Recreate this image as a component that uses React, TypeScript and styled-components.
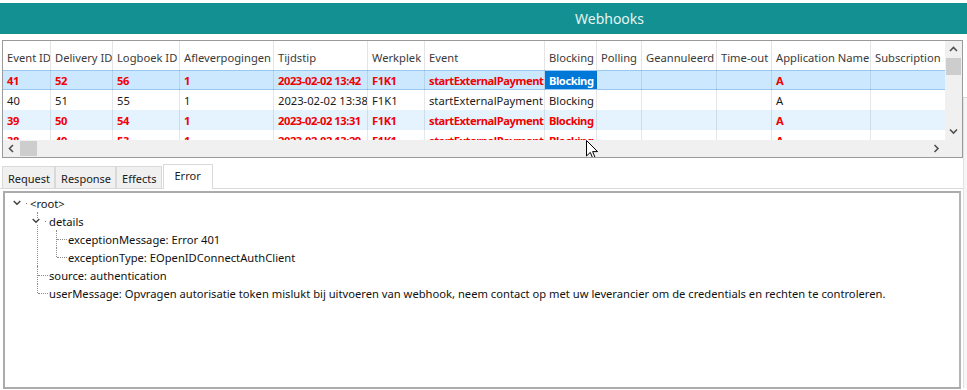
import styled, { createGlobalStyle } from "styled-components";

const GlobalStyle = createGlobalStyle`
  html, body {
    margin: 0;
    padding: 0;
    background: #fff;
    overflow: hidden;
  }
  body {
    font-family: "Noto Sans", "Segoe UI", Arial, sans-serif;
    font-size: 11.2px;
    color: #1a1a1a;
  }
`;

const Page = styled.div`
  width: 967px;
  height: 390px;
  padding-top: 3px;
  box-sizing: border-box;
`;

const TitleBar = styled.div`
  height: 31px;
  background: #139091;
  display: flex;
  align-items: center;
  padding-left: 575px;
  color: #e6f3f3;
  font-size: 14px;
`;

const Body = styled.div`
  display: flex;
`;

const Main = styled.div`
  width: 963px;
  padding-top: 6px;
`;

const Rail = styled.div`
  flex: 1;
  margin-top: 63px;
  height: 290px;
  border-top: 1px solid #d4d4d4;
  border-left: 1px solid #e2e2e2;
  background: #f6f6f6;
`;

const GridFrame = styled.div`
  position: relative;
  margin-left: 2px;
  width: 961px;
  height: 118px;
  box-sizing: border-box;
  border: 1px solid #9a9a9a;
  background: #fff;
  overflow: hidden;
`;

const GridTop = styled.div`
  display: flex;
  height: 99px;
`;

const TableArea = styled.div`
  width: 942px;
  overflow: hidden;
`;

const HeaderRow = styled.div`
  display: flex;
  height: 29px;
  color: #3a3a3a;
`;

const HeadCell = styled.div<{ $w: number }>`
  flex: none;
  width: ${(p) => p.$w}px;
  box-sizing: border-box;
  padding: 3px 0 0 4px;
  display: flex;
  align-items: center;
  border-right: 1px solid #e4e4e4;
  white-space: nowrap;
  overflow: hidden;
`;

type RowKind = "selected" | "plain" | "alt";

const DataRow = styled.div<{ $kind: RowKind; $red: boolean }>`
  display: flex;
  height: 20px;
  box-sizing: border-box;
  background: ${(p) => (p.$kind === "selected" ? "#cce8ff" : p.$kind === "alt" ? "#e5f3ff" : "#fff")};
  box-shadow: ${(p) => (p.$kind === "selected" ? "inset 0 1px #99c9f0, inset 0 -1px #99c9f0" : "none")};
  color: ${(p) => (p.$red ? "#f00000" : "#1a1a1a")};
  font-weight: ${(p) => (p.$red ? 700 : 400)};
  letter-spacing: ${(p) => (p.$red ? "-0.45px" : "0")};
`;

const Cell = styled.div<{ $w: number; $focus?: boolean }>`
  flex: none;
  width: ${(p) => p.$w}px;
  box-sizing: border-box;
  padding-left: 4px;
  display: flex;
  align-items: center;
  white-space: nowrap;
  overflow: hidden;
  border-right: 1px solid rgba(0, 20, 60, 0.1);
  ${(p) =>
    p.$focus &&
    `
    background: #0078d7;
    color: #fff;
    margin: 1px 0;
  `}
`;

const VScroll = styled.div`
  width: 17px;
  background: #f0f0f0;
  display: flex;
  flex-direction: column;
`;

const ArrowBox = styled.div`
  width: 17px;
  height: 17px;
  flex: none;
  display: flex;
  align-items: center;
  justify-content: center;
`;

const VTrack = styled.div`
  flex: 1;
  display: flex;
  flex-direction: column;
  align-items: center;
`;

const VThumb = styled.div`
  width: 15px;
  height: 17px;
  background: #cdcdcd;
`;

const GridBottom = styled.div`
  display: flex;
  height: 17px;
  background: #f0f0f0;
`;

const HScroll = styled.div`
  width: 942px;
  display: flex;
  align-items: center;
`;

const HTrack = styled.div`
  flex: 1;
  height: 100%;
  display: flex;
  align-items: center;
`;

const HThumb = styled.div`
  width: 17px;
  height: 15px;
  background: #cdcdcd;
`;

const Corner = styled.div`
  width: 17px;
`;

const Cursor = styled.svg`
  position: absolute;
  left: 583px;
  top: 99px;
`;

const TabStrip = styled.div`
  display: flex;
  align-items: flex-end;
  height: 30px;
  padding-left: 2px;
  border-bottom: 1px solid #dadada;
`;

const Tab = styled.div<{ $active?: boolean }>`
  height: ${(p) => (p.$active ? 25 : 22)}px;
  padding: ${(p) => (p.$active ? "0 11px 3px 11px" : "1px 4px 0 5px")};
  box-sizing: border-box;
  display: flex;
  align-items: center;
  background: ${(p) => (p.$active ? "#fff" : "#f0f0f0")};
  border: 1px solid #d9d9d9;
  border-bottom: none;
  margin-left: ${(p) => (p.$active ? 1 : 0)}px;
  margin-bottom: ${(p) => (p.$active ? -1 : 0)}px;
  color: #1a1a1a;
  font-size: 11px;
  & + & {
    border-left: ${(p) => (p.$active ? "1px solid #d9d9d9" : "none")};
  }
`;

const Panel = styled.div`
  margin: 2px 0 0 3px;
  width: 958px;
  height: 198px;
  box-sizing: border-box;
  border: 2px solid #ababab;
  border-right-color: #b4b4b4;
  padding-top: 1px;
  background: #fff;
`;

const ChildItem = styled.div<{ $depth: number; $last: boolean }>`
  position: relative;
  &::before {
    content: "";
    position: absolute;
    left: ${(p) => 6 + p.$depth * 19 + 7}px;
    top: 0;
    height: ${(p) => (p.$last ? "9px" : "100%")};
    border-left: 1px dotted #8c8c8c;
  }
`;

const TreeRow = styled.div<{ $depth: number }>`
  display: flex;
  align-items: center;
  height: 18px;
  padding-left: ${(p) => 6 + p.$depth * 19}px;
  white-space: nowrap;
  color: #111;
`;

const Slot = styled.div<{ $leaf: boolean }>`
  position: relative;
  flex: none;
  width: 19px;
  height: 18px;
  display: flex;
  align-items: center;
  ${(p) =>
    p.$leaf &&
    `
    &::after {
      content: "";
      position: absolute;
      left: 8px;
      top: 9px;
      width: 10px;
      border-top: 1px dotted #8c8c8c;
    }
  `}
`;

const Chevron = styled.svg`
  position: relative;
  z-index: 1;
  margin-left: 2px;
  background: #fff;
`;

const Dot = styled.span`
  width: 1px;
  height: 1px;
  margin-left: 5px;
  background: #8c8c8c;
`;

const columns = [
  { key: "eventId", title: "Event ID", w: 48 },
  { key: "deliveryId", title: "Delivery ID", w: 62 },
  { key: "logId", title: "Logboek ID", w: 67 },
  { key: "attempts", title: "Afleverpogingen", w: 94 },
  { key: "time", title: "Tijdstip", w: 94 },
  { key: "place", title: "Werkplek", w: 57 },
  { key: "event", title: "Event", w: 120 },
  { key: "blocking", title: "Blocking", w: 52 },
  { key: "polling", title: "Polling", w: 45 },
  { key: "cancelled", title: "Geannuleerd", w: 75 },
  { key: "timeout", title: "Time-out", w: 55 },
  { key: "app", title: "Application Name", w: 99 },
  { key: "subscription", title: "Subscription", w: 90 },
];

interface IRow {
  [key: string]: string;
}

const rows: { kind: RowKind; red: boolean; data: IRow }[] = [
  {
    kind: "selected",
    red: true,
    data: { eventId: "41", deliveryId: "52", logId: "56", attempts: "1", time: "2023-02-02 13:42", place: "F1K1", event: "startExternalPayment", blocking: "Blocking", app: "A" },
  },
  {
    kind: "plain",
    red: false,
    data: { eventId: "40", deliveryId: "51", logId: "55", attempts: "1", time: "2023-02-02 13:38", place: "F1K1", event: "startExternalPayment", blocking: "Blocking", app: "A" },
  },
  {
    kind: "alt",
    red: true,
    data: { eventId: "39", deliveryId: "50", logId: "54", attempts: "1", time: "2023-02-02 13:31", place: "F1K1", event: "startExternalPayment", blocking: "Blocking", app: "A" },
  },
  {
    kind: "plain",
    red: true,
    data: { eventId: "38", deliveryId: "49", logId: "53", attempts: "1", time: "2023-02-02 13:29", place: "F1K1", event: "startExternalPayment", blocking: "Blocking", app: "A" },
  },
];

function Arrow({ dir }: { dir: "up" | "down" | "left" | "right" }) {
  const d = {
    up: "M1 5 L4.5 1.5 L8 5",
    down: "M1 1.5 L4.5 5 L8 1.5",
    left: "M5 1 L1.5 4.5 L5 8",
    right: "M1.5 1 L5 4.5 L1.5 8",
  }[dir];
  const horizontal = dir === "left" || dir === "right";
  return (
    <svg width={horizontal ? 7 : 9} height={horizontal ? 9 : 7} viewBox={horizontal ? "0 0 7 9" : "0 0 9 7"}>
      <path d={d} fill="none" stroke="#505050" strokeWidth="1.6" />
    </svg>
  );
}

interface ITreeNode {
  label: string;
  children?: ITreeNode[];
}

const tree: ITreeNode = {
  label: "<root>",
  children: [
    {
      label: "details",
      children: [
        { label: "exceptionMessage: Error 401" },
        { label: "exceptionType: EOpenIDConnectAuthClient" },
      ],
    },
    { label: "source: authentication" },
    {
      label:
        "userMessage: Opvragen autorisatie token mislukt bij uitvoeren van webhook, neem contact op met uw leverancier om de credentials en rechten te controleren.",
    },
  ],
};

function TreeNode({ node, depth }: { node: ITreeNode; depth: number }) {
  const expandable = !!node.children;
  return (
    <>
      <TreeRow $depth={depth}>
        <Slot $leaf={!expandable}>
          {expandable && (
            <>
              <Chevron width="8" height="6" viewBox="0 0 8 6">
                <path d="M0.7 1 L4 4.3 L7.3 1" fill="none" stroke="#3c3c3c" strokeWidth="1.3" />
              </Chevron>
              <Dot />
            </>
          )}
        </Slot>
        {node.label}
      </TreeRow>
      {node.children?.map((child, i) => (
        <ChildItem key={child.label} $depth={depth + 1} $last={i === node.children!.length - 1}>
          <TreeNode node={child} depth={depth + 1} />
        </ChildItem>
      ))}
    </>
  );
}

export default function App() {
  return (
    <Page>
      <GlobalStyle />
      <TitleBar>Webhooks</TitleBar>
      <Body>
        <Main>
          <GridFrame>
            <GridTop>
              <TableArea>
                <HeaderRow>
                  {columns.map((c) => (
                    <HeadCell key={c.key} $w={c.w}>
                      {c.title}
                    </HeadCell>
                  ))}
                </HeaderRow>
                {rows.map((r, i) => (
                  <DataRow key={i} $kind={r.kind} $red={r.red}>
                    {columns.map((c) => (
                      <Cell key={c.key} $w={c.w} $focus={r.kind === "selected" && c.key === "blocking"}>
                        {r.data[c.key] ?? ""}
                      </Cell>
                    ))}
                  </DataRow>
                ))}
              </TableArea>
              <VScroll>
                <ArrowBox>
                  <Arrow dir="up" />
                </ArrowBox>
                <VTrack>
                  <VThumb />
                </VTrack>
                <ArrowBox>
                  <Arrow dir="down" />
                </ArrowBox>
              </VScroll>
            </GridTop>
            <GridBottom>
              <HScroll>
                <ArrowBox>
                  <Arrow dir="left" />
                </ArrowBox>
                <HTrack>
                  <HThumb />
                </HTrack>
                <ArrowBox>
                  <Arrow dir="right" />
                </ArrowBox>
              </HScroll>
              <Corner />
            </GridBottom>
            <Cursor width="13" height="20" viewBox="0 0 13 20">
              <path d="M0.5 0.5 L0.5 16 L4.3 12.4 L6.8 18.3 L9 17.3 L6.6 11.6 L11.6 11.6 Z" fill="#fff" stroke="#000" strokeWidth="1" />
            </Cursor>
          </GridFrame>
          <TabStrip>
            <Tab>Request</Tab>
            <Tab>Response</Tab>
            <Tab>Effects</Tab>
            <Tab $active>Error</Tab>
          </TabStrip>
          <Panel>
            <TreeNode node={tree} depth={0} />
          </Panel>
        </Main>
        <Rail />
      </Body>
    </Page>
  );
}
